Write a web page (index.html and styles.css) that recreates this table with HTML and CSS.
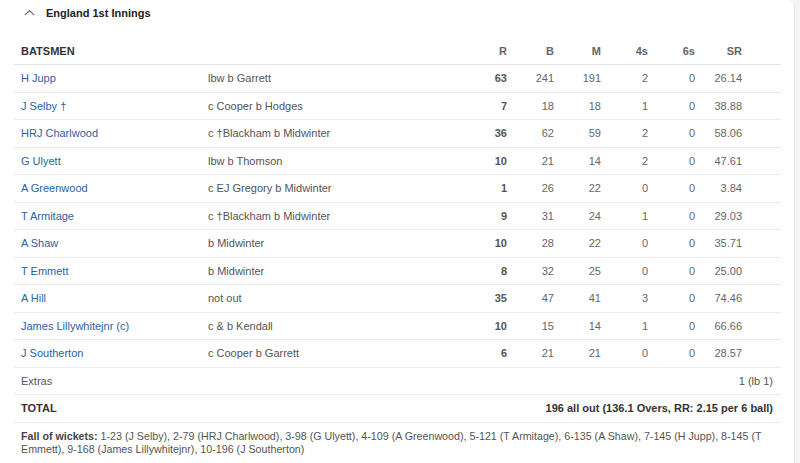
FILE: index.html
```html
<!DOCTYPE html>
<html>
<head>
<meta charset="utf-8">
<link rel="stylesheet" href="styles.css">
</head>
<body>
<div class="card">
  <div class="head">
    <svg class="chev" width="11" height="7" viewBox="0 0 11 7"><path d="M0.8 6.2 L5.5 1.5 L10.2 6.2" fill="none" stroke="#666" stroke-width="1.1"/></svg>
    <span class="title">England 1st Innings</span>
  </div>
  <div class="table">
    <div class="row hdr">
      <div class="c-name">BATSMEN</div><div class="c-dis"></div>
      <div class="n">R</div><div class="n">B</div><div class="n">M</div><div class="n">4s</div><div class="n">6s</div><div class="n sr">SR</div><div class="pad"></div>
    </div>
    <div class="row"><div class="c-name lnk">H Jupp</div><div class="c-dis">lbw b Garrett</div><div class="n r">63</div><div class="n">241</div><div class="n">191</div><div class="n">2</div><div class="n">0</div><div class="n sr">26.14</div><div class="pad"></div></div>
    <div class="row"><div class="c-name lnk">J Selby †</div><div class="c-dis">c Cooper b Hodges</div><div class="n r">7</div><div class="n">18</div><div class="n">18</div><div class="n">1</div><div class="n">0</div><div class="n sr">38.88</div><div class="pad"></div></div>
    <div class="row"><div class="c-name lnk">HRJ Charlwood</div><div class="c-dis">c †Blackham b Midwinter</div><div class="n r">36</div><div class="n">62</div><div class="n">59</div><div class="n">2</div><div class="n">0</div><div class="n sr">58.06</div><div class="pad"></div></div>
    <div class="row"><div class="c-name lnk">G Ulyett</div><div class="c-dis">lbw b Thomson</div><div class="n r">10</div><div class="n">21</div><div class="n">14</div><div class="n">2</div><div class="n">0</div><div class="n sr">47.61</div><div class="pad"></div></div>
    <div class="row"><div class="c-name lnk">A Greenwood</div><div class="c-dis">c EJ Gregory b Midwinter</div><div class="n r">1</div><div class="n">26</div><div class="n">22</div><div class="n">0</div><div class="n">0</div><div class="n sr">3.84</div><div class="pad"></div></div>
    <div class="row"><div class="c-name lnk">T Armitage</div><div class="c-dis">c †Blackham b Midwinter</div><div class="n r">9</div><div class="n">31</div><div class="n">24</div><div class="n">1</div><div class="n">0</div><div class="n sr">29.03</div><div class="pad"></div></div>
    <div class="row"><div class="c-name lnk">A Shaw</div><div class="c-dis">b Midwinter</div><div class="n r">10</div><div class="n">28</div><div class="n">22</div><div class="n">0</div><div class="n">0</div><div class="n sr">35.71</div><div class="pad"></div></div>
    <div class="row"><div class="c-name lnk">T Emmett</div><div class="c-dis">b Midwinter</div><div class="n r">8</div><div class="n">32</div><div class="n">25</div><div class="n">0</div><div class="n">0</div><div class="n sr">25.00</div><div class="pad"></div></div>
    <div class="row"><div class="c-name lnk">A Hill</div><div class="c-dis">not out</div><div class="n r">35</div><div class="n">47</div><div class="n">41</div><div class="n">3</div><div class="n">0</div><div class="n sr">74.46</div><div class="pad"></div></div>
    <div class="row"><div class="c-name lnk">James Lillywhitejnr (c)</div><div class="c-dis">c &amp; b Kendall</div><div class="n r">10</div><div class="n">15</div><div class="n">14</div><div class="n">1</div><div class="n">0</div><div class="n sr">66.66</div><div class="pad"></div></div>
    <div class="row"><div class="c-name lnk">J Southerton</div><div class="c-dis">c Cooper b Garrett</div><div class="n r">6</div><div class="n">21</div><div class="n">21</div><div class="n">0</div><div class="n">0</div><div class="n sr">28.57</div><div class="pad"></div></div>
    <div class="wide"><span>Extras</span><span>1 (lb 1)</span></div>
    <div class="wide total"><span>TOTAL</span><span>196 all out (136.1 Overs, RR: 2.15 per 6 ball)</span></div>
    <div class="fow"><b>Fall of wickets:</b> 1-23 (J Selby), 2-79 (HRJ Charlwood), 3-98 (G Ulyett), 4-109 (A Greenwood), 5-121 (T Armitage), 6-135 (A Shaw), 7-145 (H Jupp), 8-145 (T Emmett), 9-168 (James Lillywhitejnr), 10-196 (J Southerton)</div>
  </div>
</div>
</body>
</html>
```
FILE: styles.css
```css
html, body {
  margin: 0;
  padding: 0;
  background: #f4f4f4;
  font-family: "Liberation Sans", Arial, sans-serif;
  font-size: 11px;
  color: #555;
}
.card {
  width: 795px;
  height: 463px;
  box-sizing: border-box;
  background: #fff;
  border-right: 1px solid #e6e6e6;
  border-top-right-radius: 6px;
  overflow: hidden;
}
.head {
  height: 26px;
  display: flex;
  align-items: center;
  padding-left: 24px;
}
.chev {
  margin-right: 11px;
  margin-top: -1px;
}
.title {
  font-weight: bold;
  color: #222;
  font-size: 11px;
}
.table {
  margin: 11px 14px 0 14px;
  width: 767px;
}
.row {
  display: grid;
  grid-template-columns: 194px 252px repeat(6, 47px) 22px;
  height: 27.5px;
  align-items: center;
  border-bottom: 1px solid #ececec;
  box-sizing: border-box;
}
.row.hdr {
  height: 28px;
  border-bottom: 1px solid #e2e2e2;
  font-weight: bold;
  color: #444;
}
.row.hdr .c-name { color: #333; }
.c-name {
  padding-left: 7px;
  white-space: nowrap;
}
.lnk { color: #2d62a6; }
.c-dis { color: #555; }
.n {
  text-align: right;
  color: #666;
}
.n.r {
  font-weight: bold;
  color: #555;
}
.wide {
  display: flex;
  justify-content: space-between;
  align-items: center;
  height: 27.5px;
  padding: 0 8px 0 7px;
  border-bottom: 1px solid #ececec;
  box-sizing: border-box;
}
.wide.total {
  font-weight: bold;
  color: #333;
}
.fow {
  padding: 7px 8px 8px 7px;
  font-size: 10.7px;
  line-height: 13px;
  border-bottom: 1px solid #ececec;
  color: #555;
}
.fow b { color: #444; }
```
